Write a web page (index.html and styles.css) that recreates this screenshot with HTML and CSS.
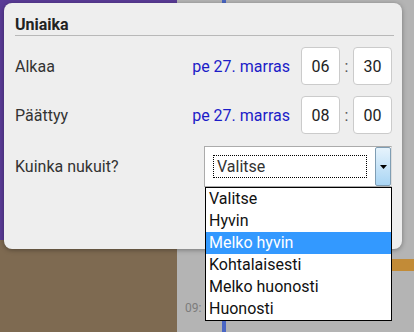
FILE: index.html
```html
<!DOCTYPE html>
<html lang="fi">
<head>
    <meta charset="UTF-8">
    <meta name="viewport" content="width=device-width, initial-scale=1.0">
    <title>Uniaika</title>
    <link rel="stylesheet" href="styles.css">
</head>
<body>
    <!-- Calendar behind the dialog -->
    <div class="app">
        <aside class="side">
            <div class="side-head"></div>
            <div class="side-body"></div>
        </aside>
        <main class="cal">
            <div class="gutter">
                <span class="hour">09:</span>
            </div>
            <div class="lane">
                <div class="event"></div>
            </div>
        </main>
    </div>

    <!-- Sleep time dialog -->
    <div class="dialog">
        <div class="title">Uniaika</div>

        <div class="row">
            <span class="label">Alkaa</span>
            <span class="date">pe 27. marras</span>
            <span class="time">06</span>
            <span class="colon">:</span>
            <span class="time">30</span>
        </div>

        <div class="row">
            <span class="label">Päättyy</span>
            <span class="date">pe 27. marras</span>
            <span class="time">08</span>
            <span class="colon">:</span>
            <span class="time">00</span>
        </div>

        <div class="row row-select">
            <span class="label">Kuinka nukuit?</span>
            <div class="select">
                <div class="value-wrap">
                    <div class="value">Valitse</div>
                </div>
                <div class="drop-btn">
                    <svg width="7" height="4" viewBox="0 0 7 4"><path d="M0 0h7L3.5 4z" fill="#000"/></svg>
                </div>
                <ul class="options">
                    <li>Valitse</li>
                    <li>Hyvin</li>
                    <li class="active">Melko hyvin</li>
                    <li>Kohtalaisesti</li>
                    <li>Melko huonosti</li>
                    <li>Huonosti</li>
                </ul>
            </div>
        </div>
    </div>
</body>
</html>
```

FILE: styles.css
```css
/* General Styles */
body {
    margin: 0;
    width: 414px;
    height: 332px;
    overflow: hidden;
    position: relative;
    font-family: Roboto, "Liberation Sans", sans-serif;
}

/* Calendar behind */
.app {
    display: flex;
    height: 332px;
}

.side {
    width: 177px;
    display: flex;
    flex-direction: column;
}

.side-head {
    height: 240px;
    background-color: #5a3b97;
}

.side-body {
    flex: 1;
    background-color: #7e6a51;
}

.cal {
    flex: 1;
    display: flex;
    background-color: #b4b4b4;
}

.gutter {
    width: 45px;
    padding: 297px 0 0 8px;
    box-sizing: border-box;
}

.hour {
    font-size: 12px;
    line-height: 14px;
    color: #7c7c7c;
}

.lane {
    flex: 1;
    border-left: 4px solid #4a66c4;
}

.event {
    margin-top: 259px;
    height: 12px;
    background-color: #c28b37;
}

/* Dialog */
.dialog {
    position: absolute;
    left: 4px;
    top: 3px;
    width: 398px;
    height: 246px;
    box-sizing: border-box;
    padding: 12px 8px 0 11px;
    background-color: #eeeeee;
    border-radius: 8px;
    box-shadow: 0 1px 5px rgba(0, 0, 0, 0.35);
}

.title {
    font-size: 16px;
    font-weight: bold;
    line-height: 19px;
    color: #222;
    padding-bottom: 1px;
    border-bottom: 1px solid #b8b8b8;
}

.row {
    display: flex;
    align-items: center;
    height: 38px;
    margin-top: 11px;
    padding-right: 2px;
    font-size: 16px;
}

.row-select {
    height: 41px;
    margin-top: 12px;
}

.label {
    flex: 1;
    color: #333;
}

.date {
    color: #1c1cc8;
    margin-right: 11px;
}

.time {
    width: 39px;
    height: 38px;
    box-sizing: border-box;
    border: 1px solid #cbcbcb;
    border-radius: 4px;
    background-color: #fff;
    color: #222;
    display: flex;
    align-items: center;
    justify-content: center;
}

.colon {
    width: 13px;
    text-align: center;
    color: #555;
}

/* Select */
.select {
    position: relative;
    width: 188px;
    height: 41px;
    box-sizing: border-box;
    border: 1px solid #ababab;
    border-right-color: #dcdcdc;
    background-color: #fff;
    display: flex;
}

.value-wrap {
    flex: 1;
    padding: 8px;
}

.value {
    height: 23px;
    box-sizing: border-box;
    border: 1px dotted #000;
    padding-left: 3px;
    line-height: 21px;
    color: #333;
}

.drop-btn {
    width: 16px;
    box-sizing: border-box;
    border: 1px solid #7f9db3;
    border-radius: 2px;
    background: linear-gradient(to bottom, #e6f3fc, #a9d5f4);
    display: flex;
    align-items: center;
    justify-content: center;
}

.options {
    position: absolute;
    top: calc(100% + 1px);
    left: 0;
    width: 187px;
    box-sizing: border-box;
    margin: 0;
    padding: 0;
    list-style: none;
    border: 1px solid #000;
    background-color: #fff;
}

.options li {
    height: 22px;
    line-height: 22px;
    padding-left: 3px;
    color: #111;
}

.options li.active {
    background-color: #3399ff;
    color: #fff;
}
```
